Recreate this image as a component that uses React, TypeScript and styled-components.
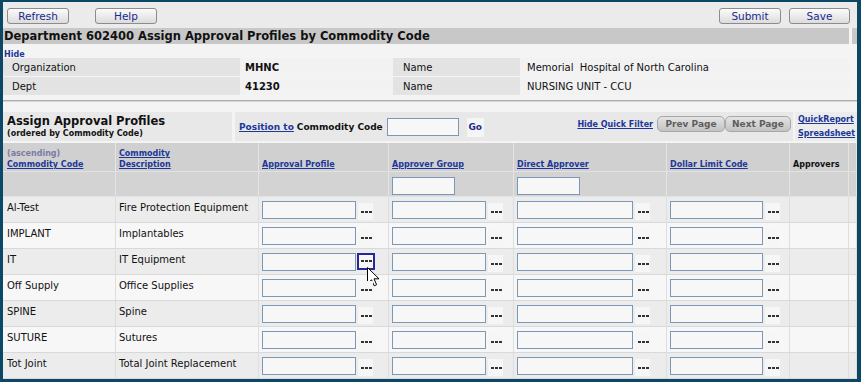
import React from 'react';
import styled, { createGlobalStyle, css } from 'styled-components';

const GlobalStyle = createGlobalStyle`
  html, body { margin: 0; padding: 0; background: #0c4766; }
  body { font-family: "DejaVu Sans", Verdana, sans-serif; color: #111; }
  * { box-sizing: border-box; }
`;

const Frame = styled.div`
  width: 861px;
  height: 382px;
  padding: 2px 4px 3px 3px;
  background: #0c4766;
  overflow: hidden;
`;

const Window = styled.div`
  position: relative;
  height: 377px;
  background: #f4f4f4;
  display: flex;
  flex-direction: column;
  overflow: hidden;
`;

const Toolbar = styled.div`
  height: 26px;
  flex: none;
  background: #ebebeb;
  display: flex;
  align-items: flex-start;
  padding: 6px 7px 0 4px;
`;

const ButtonGroup = styled.div<{ $gap: number }>`
  display: flex;
  gap: ${p => p.$gap}px;
`;

const Spacer = styled.div`
  flex: 1;
`;

const ToolButton = styled.button<{ $w: number }>`
  width: ${p => p.$w}px;
  height: 16px;
  padding: 0;
  border: 1px solid #8c8c8c;
  border-radius: 3px;
  background: linear-gradient(#fbfbfb, #dcdcdc);
  color: #1b2a8c;
  font-family: "DejaVu Sans", Verdana, sans-serif;
  font-size: 10.5px;
  line-height: 14px;
  text-align: center;
`;

const TitleRow = styled.div`
  display: flex;
  gap: 3px;
  height: 16px;
  flex: none;
  background: #f4f4f4;
`;

const TitleBar = styled.div`
  flex: 1;
  background: #c8c8c8;
  font-size: 11.5px;
  font-weight: bold;
  line-height: 16px;
  padding-left: 1px;
  white-space: nowrap;
  color: #111;
`;

const TitleEnd = styled.div`
  width: 5px;
  background: #c8c8c8;
`;

const Link = styled.a<{ $size?: number }>`
  color: #1d3799;
  text-decoration: underline;
  font-weight: bold;
  font-size: ${p => p.$size ?? 8}px;
  white-space: nowrap;
  cursor: pointer;
`;

const HideRow = styled.div`
  height: 14px;
  line-height: 15px;
  padding-left: 1px;
  flex: none;
`;

const InfoGrid = styled.div`
  display: grid;
  grid-template-columns: 237px 153px 127px 1fr;
  grid-auto-rows: 18px;
  row-gap: 1px;
  margin-right: 8px;
  flex: none;
`;

const InfoCell = styled.div<{ $label?: boolean; $bold?: boolean; $pad: number }>`
  background: ${p => (p.$label ? '#e3e3e3' : '#f2f2f2')};
  font-size: 10px;
  line-height: 16px;
  padding-top: 2px;
  padding-left: ${p => p.$pad}px;
  font-weight: ${p => (p.$bold ? 'bold' : 'normal')};
  white-space: nowrap;
`;

const Rule = styled.div`
  margin-top: 5px;
  height: 2px;
  border-top: 1px solid #adadad;
  border-bottom: 1px solid #d6d6d6;
  flex: none;
`;

const SectionHeader = styled.div`
  margin-top: 10px;
  height: 29px;
  display: flex;
  gap: 3px;
  flex: none;
`;

const SectionTitleCell = styled.div`
  width: 229px;
  background: #e8e8e8;
  padding: 2px 4px 0;
`;

const SectionTitle = styled.div`
  font-size: 11.5px;
  font-weight: bold;
  line-height: 14px;
`;

const SectionSub = styled.div`
  font-size: 8px;
  font-weight: bold;
  line-height: 11px;
`;

const FilterCell = styled.div`
  flex: 1;
  background: #e8e8e8;
  display: flex;
  align-items: center;
  padding: 0 2px 0 4px;
  margin-right: -1px;
`;

const PositionGroup = styled.div`
  display: flex;
  align-items: center;
  padding-top: 1px;
`;

const BoldLabel = styled.span`
  font-size: 9px;
  font-weight: bold;
  margin: 0 4px 0 3px;
  white-space: nowrap;
`;

const TextInput = styled.input<{ $w: number }>`
  width: ${p => p.$w}px;
  height: 18px;
  border: 1px solid #7b98b6;
  background: #f7f7f7;
  padding: 0 2px;
  margin: 0;
  flex: none;
`;

const GoButton = styled.button`
  width: 17px;
  height: 19px;
  margin-left: 8px;
  border: none;
  padding: 0;
  background: #f5f5f5;
  color: #1d2a8c;
  font-family: "DejaVu Sans", Verdana, sans-serif;
  font-size: 9px;
  font-weight: bold;
`;

const PagerGroup = styled.div`
  display: flex;
  align-items: center;
  margin-bottom: 5px;
`;

const PageButton = styled.button<{ $w: number }>`
  width: ${p => p.$w}px;
  height: 16px;
  padding: 0;
  border: 1px solid #a8a8a8;
  border-radius: 5px;
  background: linear-gradient(#e4e4e4, #c2c2c2);
  color: #5e5e5e;
  font-family: "DejaVu Sans", Verdana, sans-serif;
  font-size: 9px;
  font-weight: bold;
  line-height: 14px;
  text-align: center;
`;

const QuickLinks = styled.div`
  width: 62px;
  background: #ececec;
  display: flex;
  flex-direction: column;
  padding: 1px 0 0 3px;
  line-height: 14px;
`;

const Table = styled.div`
  margin-top: 2px;
  display: flex;
  flex-direction: column;
`;

const COLS = '113px 143px 130px 125px 153px 123px 59px 1fr';

const Row = styled.div<{ $kind: 'head' | 'filter' | 'data'; $odd?: boolean }>`
  display: grid;
  grid-template-columns: ${COLS};
  flex: none;
  ${p =>
    p.$kind === 'head'
      ? css`height: 29px; background: #d0d0d0;`
      : p.$kind === 'filter'
      ? css`height: 25px; background: #d3d3d3;`
      : css`height: 26px; background: ${p.$odd ? '#ececec' : '#f7f7f7'};`}
`;

const Cell = styled.div<{ $kind: 'head' | 'filter' | 'data'; $first?: boolean }>`
  border-right: 1px solid ${p => (p.$kind === 'data' ? '#dedede' : '#e4e4e4')};
  border-bottom: 1px solid ${p => (p.$kind === 'data' ? '#d9d9d9' : '#e2e2e2')};
  padding-left: ${p => (p.$first ? 4 : 3)}px;
  ${p =>
    p.$kind === 'head'
      ? css`
          display: flex;
          flex-direction: column;
          justify-content: flex-end;
          padding-bottom: 1px;
          line-height: 11px;
          font-size: 8px;
          font-weight: bold;
        `
      : p.$kind === 'filter'
      ? css`padding-top: 3px;`
      : css`
          font-size: 10px;
          line-height: 12px;
          padding-top: 5px;
          white-space: nowrap;
        `}
`;

const Ascending = styled.span`
  color: #7c7ca6;
  font-weight: bold;
`;

const HeadText = styled.span`
  color: #111;
`;

const InputCell = styled(Cell)`
  display: flex;
  align-items: flex-start;
  padding-top: 4px;
  gap: 2px;
`;

const Ellipsis = styled.button<{ $hover?: boolean }>`
  position: relative;
  width: 15px;
  height: 17px;
  margin-top: 2px;
  padding: 0;
  border: none;
  background: #f6f6f6;
  flex: none;
  ${p =>
    p.$hover &&
    css`
      width: 18px;
      margin-left: -1px;
      margin-top: 0;
      border: 2px solid #27279a;
    `}
`;

const Dots = styled.span<{ $hover?: boolean }>`
  position: absolute;
  left: ${p => (p.$hover ? 2 : 3)}px;
  top: ${p => (p.$hover ? 5 : 8)}px;
  width: 3px;
  height: 2px;
  background: #333;
  box-shadow: 4px 0 #333, 8px 0 #333;
`;

const Cursor = styled.svg`
  position: absolute;
  left: 8px;
  top: 12px;
  width: 13px;
  height: 20px;
  overflow: visible;
  pointer-events: none;
`;

const rows: [string, string][] = [
  ['Al-Test', 'Fire Protection Equipment'],
  ['IMPLANT', 'Implantables'],
  ['IT', 'IT Equipment'],
  ['Off Supply', 'Office Supplies'],
  ['SPINE', 'Spine'],
  ['SUTURE', 'Sutures'],
  ['Tot Joint', 'Total Joint Replacement'],
];

const inputWidths = [94, 94, 116, 93];

export default function App() {
  return (
    <>
      <GlobalStyle />
      <Frame>
        <Window>
          <Toolbar>
            <ButtonGroup $gap={26}>
              <ToolButton $w={62}>Refresh</ToolButton>
              <ToolButton $w={62}>Help</ToolButton>
            </ButtonGroup>
            <Spacer />
            <ButtonGroup $gap={8}>
              <ToolButton $w={62}>Submit</ToolButton>
              <ToolButton $w={61}>Save</ToolButton>
            </ButtonGroup>
          </Toolbar>

          <TitleRow>
            <TitleBar>Department 602400 Assign Approval Profiles by Commodity Code</TitleBar>
            <TitleEnd />
          </TitleRow>

          <HideRow>
            <Link $size={8}>Hide</Link>
          </HideRow>

          <InfoGrid>
            <InfoCell $label $pad={9}>Organization</InfoCell>
            <InfoCell $bold $pad={5}>MHNC</InfoCell>
            <InfoCell $label $pad={10}>Name</InfoCell>
            <InfoCell $pad={7}>Memorial&nbsp; Hospital of North Carolina</InfoCell>
            <InfoCell $label $pad={9}>Dept</InfoCell>
            <InfoCell $bold $pad={5}>41230</InfoCell>
            <InfoCell $label $pad={10}>Name</InfoCell>
            <InfoCell $pad={7}>NURSING UNIT - CCU</InfoCell>
          </InfoGrid>

          <Rule />

          <SectionHeader>
            <SectionTitleCell>
              <SectionTitle>Assign Approval Profiles</SectionTitle>
              <SectionSub>(ordered by Commodity Code)</SectionSub>
            </SectionTitleCell>
            <FilterCell>
              <PositionGroup>
                <Link $size={9}>Position to</Link>
                <BoldLabel>Commodity Code</BoldLabel>
                <TextInput $w={72} />
                <GoButton>Go</GoButton>
              </PositionGroup>
              <Spacer />
              <PagerGroup>
                <Link $size={8}>Hide Quick Filter</Link>
                <PageButton $w={68} style={{ marginLeft: 4 }}>Prev Page</PageButton>
                <PageButton $w={66}>Next Page</PageButton>
              </PagerGroup>
            </FilterCell>
            <QuickLinks>
              <Link $size={8}>QuickReport</Link>
              <Link $size={8}>Spreadsheet</Link>
            </QuickLinks>
          </SectionHeader>

          <Table>
            <Row $kind="head">
              <Cell $kind="head" $first>
                <Ascending>(ascending)</Ascending>
                <Link $size={8}>Commodity Code</Link>
              </Cell>
              <Cell $kind="head">
                <Link $size={8}>Commodity</Link>
                <Link $size={8}>Description</Link>
              </Cell>
              <Cell $kind="head"><Link $size={8}>Approval Profile</Link></Cell>
              <Cell $kind="head"><Link $size={8}>Approver Group</Link></Cell>
              <Cell $kind="head"><Link $size={8}>Direct Approver</Link></Cell>
              <Cell $kind="head"><Link $size={8}>Dollar Limit Code</Link></Cell>
              <Cell $kind="head"><HeadText>Approvers</HeadText></Cell>
              <Cell $kind="head" />
            </Row>
            <Row $kind="filter">
              <Cell $kind="filter" $first />
              <Cell $kind="filter" />
              <Cell $kind="filter" />
              <Cell $kind="filter"><TextInput $w={63} /></Cell>
              <Cell $kind="filter"><TextInput $w={63} /></Cell>
              <Cell $kind="filter" />
              <Cell $kind="filter" />
              <Cell $kind="filter" />
            </Row>
            {rows.map(([code, desc], i) => (
              <Row $kind="data" $odd={i % 2 === 0} key={code}>
                <Cell $kind="data" $first>{code}</Cell>
                <Cell $kind="data">{desc}</Cell>
                {inputWidths.map((w, j) => {
                  const hover = i === 2 && j === 0;
                  return (
                    <InputCell $kind="data" key={j}>
                      <TextInput $w={w} />
                      <Ellipsis $hover={hover}>
                        <Dots $hover={hover} />
                        {hover && (
                          <Cursor viewBox="0 0 13 20">
                            <path
                              d="M0.5 0.5 L0.5 16.5 L4.5 12.8 L7.2 18.8 L9.6 17.7 L7 11.8 L12 11.8 Z"
                              fill="#ffffff"
                              stroke="#000000"
                              strokeWidth="1"
                              strokeLinejoin="miter"
                            />
                          </Cursor>
                        )}
                      </Ellipsis>
                    </InputCell>
                  );
                })}
                <Cell $kind="data" />
                <Cell $kind="data" />
              </Row>
            ))}
          </Table>
        </Window>
      </Frame>
    </>
  );
}
